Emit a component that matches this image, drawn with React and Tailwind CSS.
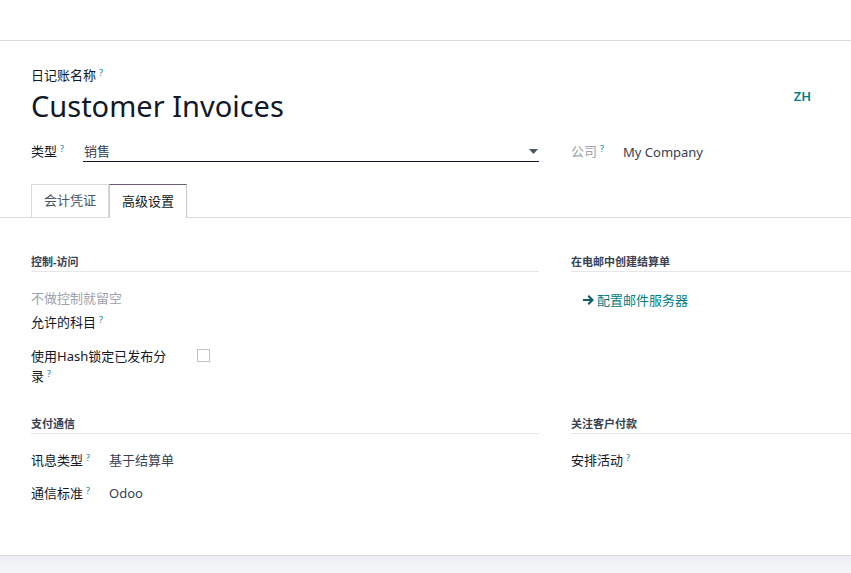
import React from 'react';

const font = { fontFamily: '"Noto Sans", "Noto Sans CJK SC", sans-serif' };

const Q = () => <sup className="ml-[3px] text-[9px] text-[#0180a5] font-normal">?</sup>;

const SectionTitle = ({ children }) => (
  <div className="border-b border-[#e5e7eb] pb-[1px] mb-[18px] text-[11px] font-bold text-[#374151] leading-[16px]">
    {children}
  </div>
);

const Row = ({ label, value, labelW = 'w-[78px]', className = '' }) => (
  <div className={`flex items-start text-[13px] leading-[20px] ${className}`}>
    <div className={`${labelW} shrink-0 text-[#111827]`}>
      {label}
      <Q />
    </div>
    <div className="text-[#374151]">{value}</div>
  </div>
);

export default function App() {
  return (
    <div className="w-[851px] h-[573px] overflow-hidden bg-[#f1f2f5] flex flex-col" style={font}>
      <div className="h-[41px] bg-white border-b border-[#d8dadd] shrink-0" />
      <div className="h-[515px] bg-white border-b border-[#d8dadd] shrink-0 flex flex-col">
        <div className="px-[31px] pt-[24px] flex">
          <div className="w-[508px] shrink-0">
            <div className="text-[13px] leading-[20px] text-[#111827]">
              日记账名称<Q />
            </div>
            <div className="text-[29px] leading-[36px] text-[#111827] mt-[3px]">Customer Invoices</div>
          </div>
          <div className="flex-1 flex justify-end pt-[22px] pr-[9px]">
            <span className="text-[13px] font-semibold text-[#017e84]">ZH</span>
          </div>
        </div>

        <div className="px-[31px] mt-[17px] flex items-start">
          <div className="w-[508px] shrink-0 flex items-start text-[13px] leading-[20px]">
            <div className="w-[52px] shrink-0 text-[#111827]">
              类型<Q />
            </div>
            <div className="flex-1 flex items-center justify-between border-b border-[#111827] pl-[1px] h-[21px]">
              <span className="text-[#374151]">销售</span>
              <svg width="9" height="5" viewBox="0 0 9 5" className="mr-[1px]">
                <path d="M0 0 L9 0 L4.5 5 Z" fill="#4b5563" />
              </svg>
            </div>
          </div>
          <div className="ml-[32px] flex items-start text-[13px] leading-[20px]">
            <div className="w-[52px] shrink-0 text-[#9ca3af]">
              公司<Q />
            </div>
            <div className="text-[#374151] mt-[1px]">My Company</div>
          </div>
        </div>

        <div className="mt-[22px] flex border-b border-[#d8dadd] pl-[31px]">
          <div className="px-[12px] h-[33px] flex items-center border border-b-0 border-[#d8dadd] text-[13px] text-[#4b5563] -mb-px">
            会计凭证
          </div>
          <div className="px-[12px] h-[34px] flex items-center border border-b-0 border-[#c6c9cf] border-t-[#6b5b6e] bg-white text-[13px] text-[#111827] -mb-px">
            高级设置
          </div>
        </div>

        <div className="px-[31px] pt-[36px] flex">
          <div className="w-[508px] shrink-0">
            <SectionTitle>控制-访问</SectionTitle>
            <div className="text-[13px] leading-[20px] text-[#9ca3af] mt-[-2px]">不做控制就留空</div>
            <div className="text-[13px] leading-[20px] text-[#111827] mt-[4px]">
              允许的科目<Q />
            </div>
            <div className="flex items-start text-[13px] leading-[20px] mt-[14px]">
              <div className="w-[140px] shrink-0 text-[#111827]">
                使用Hash锁定已发布分录<Q />
              </div>
              <div className="ml-[26px] mt-[3px] w-[13px] h-[13px] border border-[#c0c3c8] bg-white" />
            </div>

            <div className="mt-[30px]">
              <SectionTitle>支付通信</SectionTitle>
              <Row label="讯息类型" value="基于结算单" className="mt-[-2px]" />
              <Row label="通信标准" value="Odoo" className="mt-[13px]" />
            </div>
          </div>

          <div className="ml-[32px] w-[508px] shrink-0">
            <SectionTitle>在电邮中创建结算单</SectionTitle>
            <div className="flex items-center text-[13px] leading-[20px] text-[#017e84] pl-[12px] mt-[4px]">
              <svg width="11" height="10" viewBox="0 0 11 10" className="mr-[3px]">
                <path d="M0 4 H7 L4.5 1.5 L6 0 L11 5 L6 10 L4.5 8.5 L7 6 H0 Z" fill="#0e5f66" />
              </svg>
              <span>配置邮件服务器</span>
            </div>

            <div className="mt-[106px]">
              <SectionTitle>关注客户付款</SectionTitle>
              <div className="text-[13px] leading-[20px] text-[#111827] mt-[-2px]">
                安排活动<Q />
              </div>
            </div>
          </div>
        </div>
      </div>
      <div className="flex-1 bg-gradient-to-b from-[#eceef2] to-[#f5f6f8]" />
    </div>
  );
}
